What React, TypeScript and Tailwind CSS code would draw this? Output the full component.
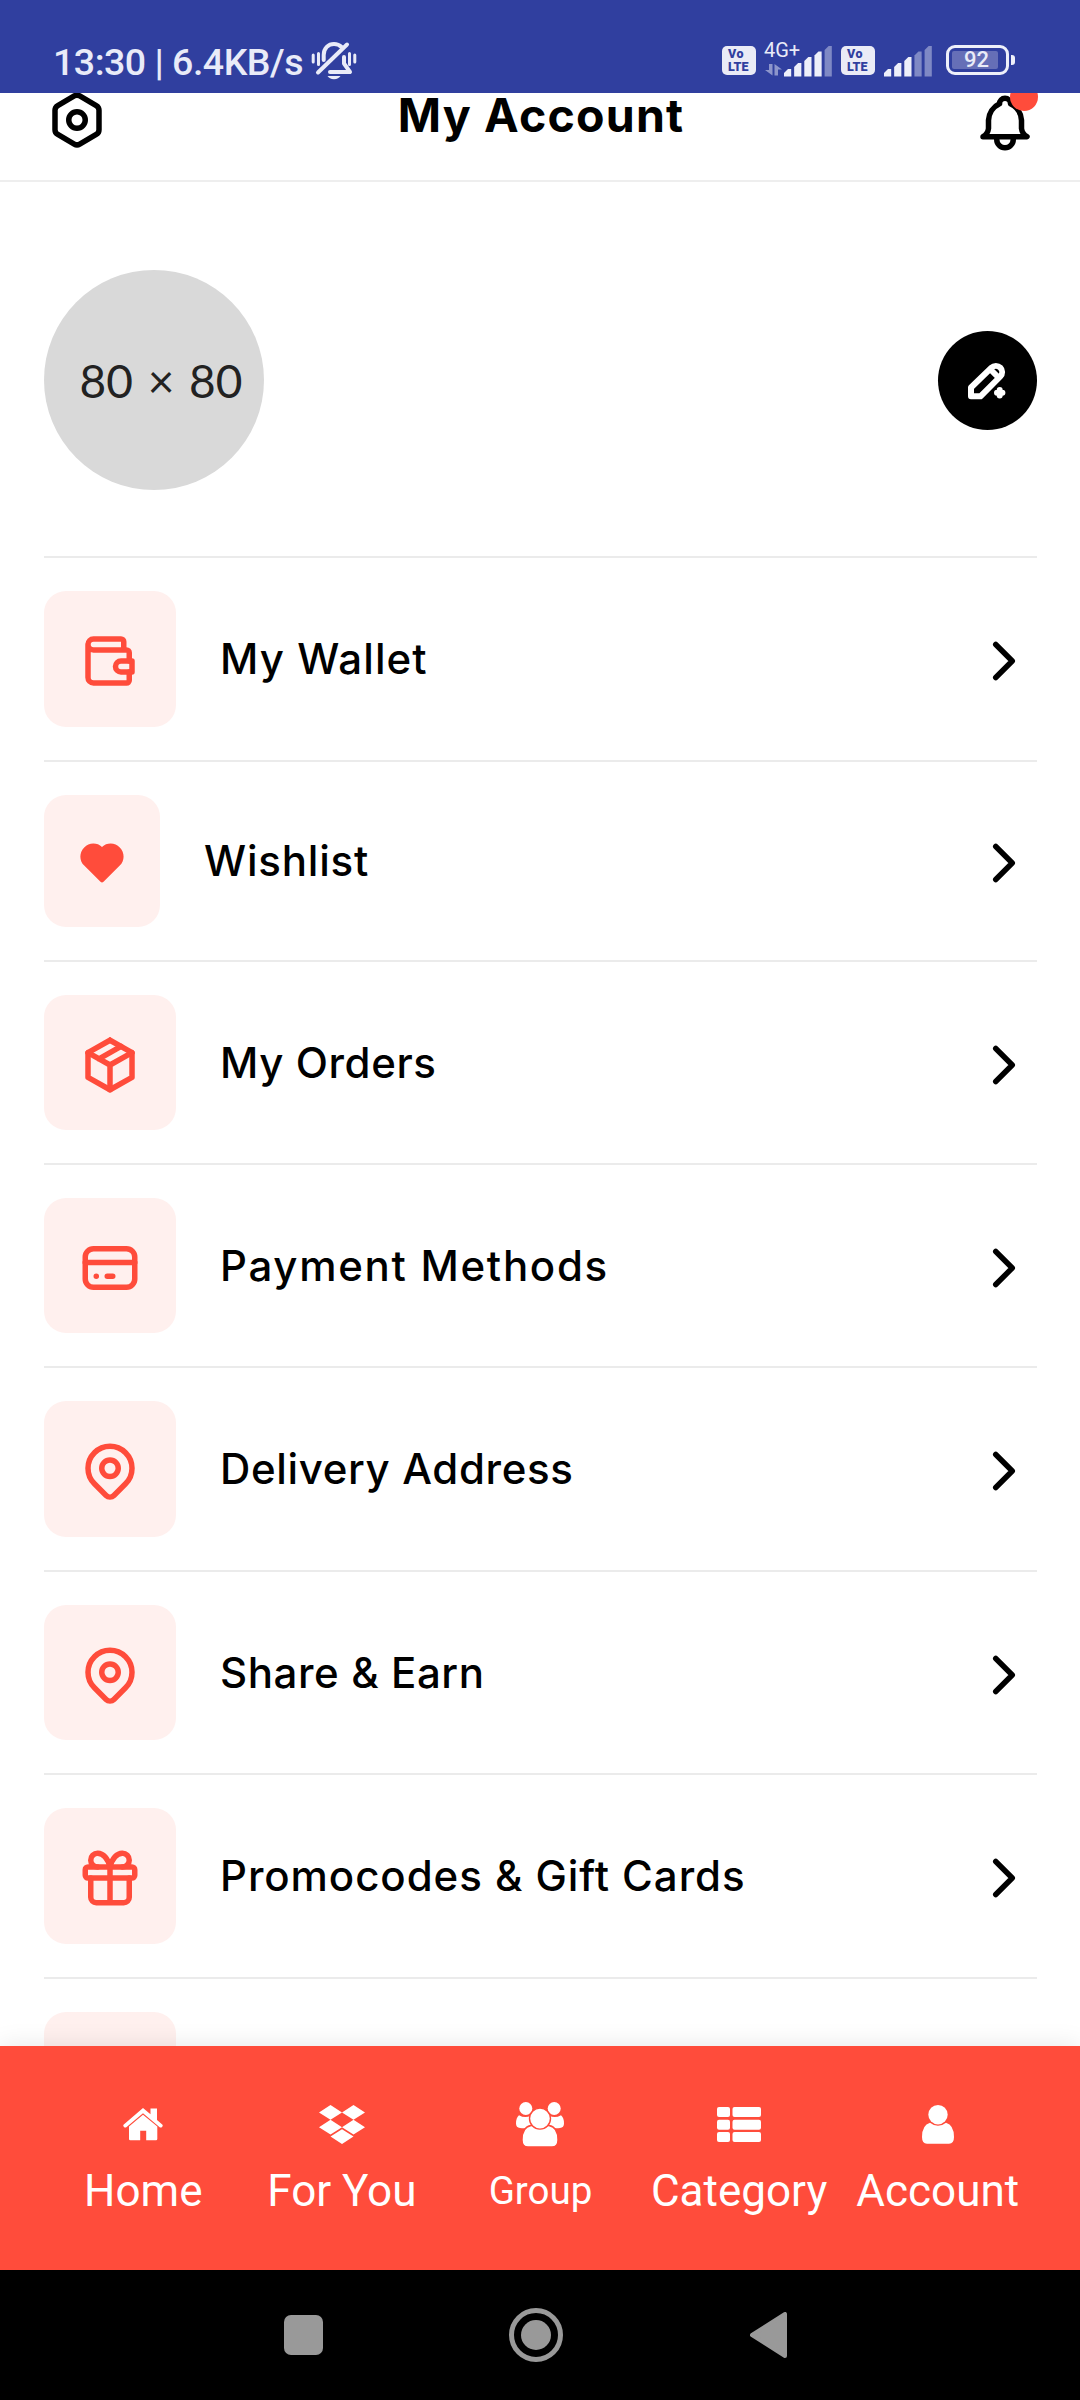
import type { ReactNode } from 'react';

type IconProps = { className?: string; children: ReactNode };

function LineIcon({ className = '', children }: IconProps) {
  return (
    <svg
      viewBox="0 0 24 24"
      className={`h-[66px] w-[66px] shrink-0 ${className}`}
      fill="none"
      stroke="currentColor"
      strokeWidth="2"
      strokeLinecap="round"
      strokeLinejoin="round"
    >
      {children}
    </svg>
  );
}

const wallet = (
  <>
    <path d="M17 8v-3a1 1 0 0 0 -1 -1h-10a2 2 0 0 0 0 4h12a1 1 0 0 1 1 1v3m0 4v3a1 1 0 0 1 -1 1h-12a2 2 0 0 1 -2 -2v-12" />
    <path d="M20 12v4h-4a2 2 0 0 1 0 -4h4" />
  </>
);
const box = (
  <>
    <path d="M12 3l8 4.5v9l-8 4.5l-8 -4.5v-9l8 -4.5" />
    <path d="M12 12l8 -4.5M12 12v9M12 12l-8 -4.5M16 5.25l-8 4.5" />
  </>
);
const card = (
  <>
    <rect x="3" y="5" width="18" height="14" rx="3" />
    <path d="M3 10h18M7 15h.01M11 15h2" />
  </>
);
const pin = (
  <>
    <circle cx="12" cy="11" r="3" />
    <path d="M17.657 16.657l-4.243 4.243a2 2 0 0 1 -2.827 0l-4.244 -4.243a8 8 0 1 1 11.314 0z" />
  </>
);
const gift = (
  <>
    <rect x="3" y="8" width="18" height="4" rx="1" />
    <path d="M12 8v13M19 12v7a2 2 0 0 1 -2 2h-10a2 2 0 0 1 -2 -2v-7" />
    <path d="M7.5 8a2.5 2.5 0 0 1 0 -5a4.8 8 0 0 1 4.5 5a4.8 8 0 0 1 4.5 -5a2.5 2.5 0 0 1 0 5" />
  </>
);

const rows = [
  { label: 'My Wallet', icon: wallet, row: 'h-[204px]', tile: 'h-[136px] w-[132px]', body: 'h-[136px]', text: 'tracking-[1.1px]' },
  { label: 'Wishlist', icon: null, row: 'h-[200px]', tile: 'h-[132px] w-[116px]', body: 'h-[132px]', text: 'tracking-[0.8px]' },
  { label: 'My Orders', icon: box, row: 'h-[203px]', tile: 'h-[135px] w-[132px]', body: 'h-[135px]', text: 'tracking-[0.6px]' },
  { label: 'Payment Methods', icon: card, row: 'h-[203px]', tile: 'h-[135px] w-[132px]', body: 'h-[135px]', text: 'tracking-[1.7px]' },
  { label: 'Delivery Address', icon: pin, row: 'h-[204px]', tile: 'h-[136px] w-[132px]', body: 'h-[136px]', text: 'tracking-[0.65px]' },
  { label: 'Share & Earn', icon: pin, row: 'h-[203px]', tile: 'h-[135px] w-[132px]', body: 'h-[135px]', text: 'tracking-[0.6px]' },
  { label: 'Promocodes & Gift Cards', icon: gift, row: 'h-[204px]', tile: 'h-[136px] w-[132px]', body: 'h-[136px]', text: 'tracking-[0.95px]' },
];

function VoLte() {
  return (
    <div className="flex h-[29px] w-[34px] flex-col justify-center rounded-[5px] bg-[#eaebf6] pl-[6px] font-['Roboto'] text-[12.5px] leading-[12.5px] font-black text-[#303f9f]">
      <span className="tracking-[0.5px]">Vo</span>
      <span>LTE</span>
    </div>
  );
}

function Signal({ strong }: { strong: number }) {
  const tops = [23, 17, 11, 5.5, 0];
  return (
    <svg width="48" height="31" viewBox="0 0 48 31" fill="#eef0fa">
      {tops.map((t, i) => (
        <path
          key={t}
          opacity={i < strong ? 1 : 0.42}
          d={`M${i * 10.15} ${t + 4}L${i * 10.15 + 4} ${t}H${i * 10.15 + 7.2}V30.5H${i * 10.15}Z`}
        />
      ))}
    </svg>
  );
}

function StatusBar() {
  return (
    <div className="flex h-[93px] shrink-0 items-start bg-[#303f9f] pl-[53px] text-[#e9ebf8]">
      <div className="mt-[40px] w-[258px] font-['Roboto'] text-[37.5px] leading-[44px] font-medium tracking-[-0.5px] whitespace-nowrap">
        13:30 | 6.4KB/s
      </div>
      <svg width="46" height="40" viewBox="0 0 46 40" className="mt-[41px]" fill="none" stroke="currentColor" strokeLinecap="round">
        <path d="M2.200 14v7M43.800 14v7M7.500 12.500v11M38.500 12.500v11" strokeWidth="3" />
        <path d="M12.700 19V14C12.700 7 17.500 3 23 3c3 0 5.500 1 7.500 3M33 16v6.500l6 8.500H19" strokeWidth="4" strokeLinejoin="round" />
        <path d="M36 3.500L7 31.500" strokeWidth="4" />
        <path d="M16.500 35h13a7 5 0 0 1-13 0z" fill="currentColor" stroke="none" />
      </svg>
      <div className="mt-[46px] ml-[365px]"><VoLte /></div>
      <div className="mt-[40px] ml-[8px] flex w-[22px] flex-col">
        <span className="font-['Roboto'] text-[20px] leading-[20px] whitespace-nowrap">4G+</span>
        <svg width="18" height="12" viewBox="0 0 18 12" className="mt-[4px] ml-[1px]" fill="currentColor" opacity="0.5">
          <path d="M4 0h3.500v11.500L0 6h4zM9.500 11.500V0L17 5.500h-4v6z" />
        </svg>
      </div>
      <div className="mt-[45.5px] -ml-[2px]"><Signal strong={4} /></div>
      <div className="mt-[46px] ml-[9px]"><VoLte /></div>
      <div className="mt-[45.5px] ml-[9px]"><Signal strong={3} /></div>
      <div className="mt-[45px] ml-[14px] flex items-center">
        <div className="flex h-[30px] w-[63px] items-center rounded-[9px] border-[3px] border-[#eef0fa] pl-[3px]">
          <div className="flex h-[18px] w-[46px] items-center justify-center rounded-[2px] bg-[#666fb7] pl-[3px] font-['Roboto'] text-[22px] leading-[22px] font-medium">
            92
          </div>
        </div>
        <div className="ml-[2px] h-[10px] w-[4px] rounded-r-[3px] bg-[#eef0fa]" />
      </div>
    </div>
  );
}

function Header() {
  return (
    <div className="flex h-[89px] shrink-0 items-start justify-between overflow-hidden border-b-2 border-[#eeeeee] pr-[42px] pl-[44px]">
      <LineIcon className="-mt-[6px]">
        <path d="M13 3.250l6 3.500a2 2 0 0 1 1 1.750v7a2 2 0 0 1 -1 1.750l-6 3.500a2 2 0 0 1 -2 0l-6 -3.500a2 2 0 0 1 -1 -1.750v-7a2 2 0 0 1 1 -1.750l6 -3.500a2 2 0 0 1 2 0z" />
        <circle cx="12" cy="12" r="3" />
      </LineIcon>
      <h1 className="w-[320px] text-center font-['Inter'] text-[46.5px] leading-[44px] font-bold tracking-[1.2px] whitespace-nowrap">
        My Account
      </h1>
      <div className="relative -mt-[3px]">
        <LineIcon>
          <path d="M10 5a2 2 0 1 1 4 0a7 7 0 0 1 4 6v3a4 4 0 0 0 2 3h-16a4 4 0 0 0 2 -3v-3a7 7 0 0 1 4 -6" />
          <path d="M9 17v1a3 3 0 0 0 6 0v-1" />
        </LineIcon>
        <span className="absolute -top-[7px] right-0 h-[28px] w-[28px] rounded-full bg-[#ff4c3b]" />
      </div>
    </div>
  );
}

function Profile() {
  return (
    <div className="mr-[43px] ml-[44px] flex h-[374px] shrink-0 items-start justify-between pt-[88px]">
      <div className="flex h-[220px] w-[220px] items-center justify-center rounded-full bg-[#d9d9d9] pl-[14px] font-['Lato'] text-[46px] [word-spacing:3px] whitespace-nowrap text-[#222222]">
        80 × 80
      </div>
      <div className="mt-[61px] h-[99px] w-[99px] rounded-full bg-black">
        <svg viewBox="0 0 99 99" className="h-full w-full" fill="none" stroke="white" strokeWidth="6" strokeLinejoin="round" strokeLinecap="round">
          <path d="M33 65.300h9.500L62.300 45.500a5.900 5.900 0 0 0-8.800-8.800L33 56.500zM52.500 38.500l7.500 7.500" />
          <path d="M61.700 59v5.400M59 61.700h5.400" />
        </svg>
      </div>
    </div>
  );
}

function Heart() {
  return (
    <svg viewBox="0 0 24 24" className="h-[52px] w-[52px]" fill="currentColor">
      <path d="M20.205 4.791a5.938 5.938 0 0 0-4.209-1.754A5.906 5.906 0 0 0 12 4.595a5.904 5.904 0 0 0-3.996-1.558 5.942 5.942 0 0 0-4.213 1.758c-2.353 2.363-2.352 6.059.002 8.412L11.300 20.700q.7.600 1.400 0L20.207 13.207c2.354-2.353 2.355-6.049-.002-8.416z" />
    </svg>
  );
}

function Menu() {
  return (
    <div className="mr-[43px] ml-[44px] flex min-h-0 flex-1 flex-col overflow-hidden">
      {rows.map((r) => (
        <div key={r.label} className={`flex shrink-0 items-start border-t-2 border-[#ebebeb] pt-[33px] ${r.row}`}>
          <div className={`flex shrink-0 items-center justify-center rounded-[22px] bg-[#fff0ee] pt-[4px] text-[#ff4c3b] ${r.tile}`}>
            {r.icon ? <LineIcon>{r.icon}</LineIcon> : <Heart />}
          </div>
          <div className={`ml-[44px] flex flex-1 items-center justify-between ${r.body}`}>
            <span className={`font-['Inter'] text-[42px] leading-[50px] font-medium whitespace-nowrap ${r.text}`}>{r.label}</span>
            <LineIcon className="mt-[4px]">
              <path d="M9 6l6 6l-6 6" />
            </LineIcon>
          </div>
        </div>
      ))}
      <div className="shrink-0 border-t-2 border-[#ebebeb] pt-[33px]">
        <div className="h-[136px] w-[132px] rounded-[22px] bg-[#fff0ee]" />
      </div>
    </div>
  );
}

const tabs = [
  {
    label: 'Home',
    size: 'text-[44px]',
    icon: (
      <svg width="40" height="33" viewBox="0 0 40 33" fill="white">
        <path d="M20 0L27.500 6.300V.5h6.500v11.500L39.500 16.700q.8 1.500-1 2.700h-1.500L20 5.200 3 19.400H1.500Q-.3 18.200.5 16.700z" />
        <path d="M20 6.700L34.300 18.600V31q0 1.300-1.300 1.300h-9.800V22.800h-6v9.500H7.300Q6 32.300 6 31V18.600z" />
      </svg>
    ),
  },
  {
    label: 'For You',
    size: 'text-[44px]',
    icon: (
      <svg width="46" height="40" viewBox="0 0 46 40" fill="white">
        <path d="M11.500 0L23 7.400 11.500 14.800 0 7.400zM34.500 0L46 7.400 34.500 14.800 23 7.400zM11.500 14.800L23 22.200 11.500 29.500 0 22.200zM34.500 14.800L46 22.200 34.500 29.500 23 22.200zM23 24.200L34.500 31.600 23 39 11.500 31.600z" />
      </svg>
    ),
  },
  {
    label: 'Group',
    size: 'text-[38.5px]',
    icon: (
      <svg width="48" height="45" viewBox="0 0 48 45" fill="white">
        <circle cx="9.800" cy="6.500" r="6.500" />
        <circle cx="38.200" cy="6.500" r="6.500" />
        <path d="M3 13.200Q9.500 17 15 13.200L17 24Q12 27 4 26Q0 25.500 0 21.500Q0 15.500 3 13.200z" />
        <path d="M45 13.200Q38.500 17 33 13.200L31 24Q36 27 44 26Q48 25.500 48 21.500Q48 15.500 45 13.200z" />
        <path d="M15 23.500H33Q42 25 42 38Q42 45 36 45H12Q6 45 6 38Q6 25 15 23.500z" stroke="#ff4c3b" strokeWidth="1.400" />
        <circle cx="24" cy="16.600" r="10.500" stroke="#ff4c3b" strokeWidth="1.400" />
      </svg>
    ),
  },
  {
    label: 'Category',
    size: 'text-[44px]',
    icon: (
      <svg width="44" height="36" viewBox="0 0 44 36" fill="white">
        {[0, 12.7, 25].map((y) => (
          <g key={y}>
            <rect x="0" y={y} width="13" height="10" rx="2" />
            <rect x="15.5" y={y} width="28.5" height="10" rx="2" />
          </g>
        ))}
      </svg>
    ),
  },
  {
    label: 'Account',
    size: 'text-[44px]',
    icon: (
      <svg width="32" height="39" viewBox="0 0 32 39" fill="white">
        <circle cx="16" cy="9.700" r="9.700" />
        <path d="M8 17.700Q16 24 24 17.700Q32 20 32 32Q32 38.700 27 38.700H5Q0 38.700 0 32Q0 20 8 17.700z" />
      </svg>
    ),
  },
];

function TabBar() {
  return (
    <nav className="relative grid h-[224px] shrink-0 grid-cols-5 bg-[#ff4c3b] pr-[43px] pl-[44px] shadow-[0_0_24px_rgba(0,0,0,0.1)]">
      {tabs.map((t) => (
        <div key={t.label} className="flex flex-col items-center pt-[56px] text-white">
          <div className="flex h-[45px] items-center">{t.icon}</div>
          <div className={`mt-[18px] flex h-[52px] items-baseline font-['Roboto'] leading-[52px] whitespace-nowrap ${t.size}`}>{t.label}</div>
        </div>
      ))}
    </nav>
  );
}

function SystemNav() {
  return (
    <div className="flex h-[130px] shrink-0 items-center bg-black pl-[284px]">
      <div className="h-[40px] w-[39px] rounded-[7px] bg-[#999999]" />
      <div className="ml-[186px] flex h-[54px] w-[54px] items-center justify-center rounded-full border-[5px] border-[#999999]">
        <div className="h-[30px] w-[30px] rounded-full bg-[#999999]" />
      </div>
      <svg width="37" height="46" viewBox="0 0 37 46" className="ml-[187px]" fill="#999999" stroke="#999999" strokeWidth="4" strokeLinejoin="round">
        <path d="M35 2v42L2 23z" />
      </svg>
    </div>
  );
}

export default function App() {
  return (
    <div className="flex h-[2400px] w-[1080px] flex-col overflow-hidden bg-white font-['Inter'] text-black">
      <StatusBar />
      <Header />
      <Profile />
      <Menu />
      <TabBar />
      <SystemNav />
    </div>
  );
}
